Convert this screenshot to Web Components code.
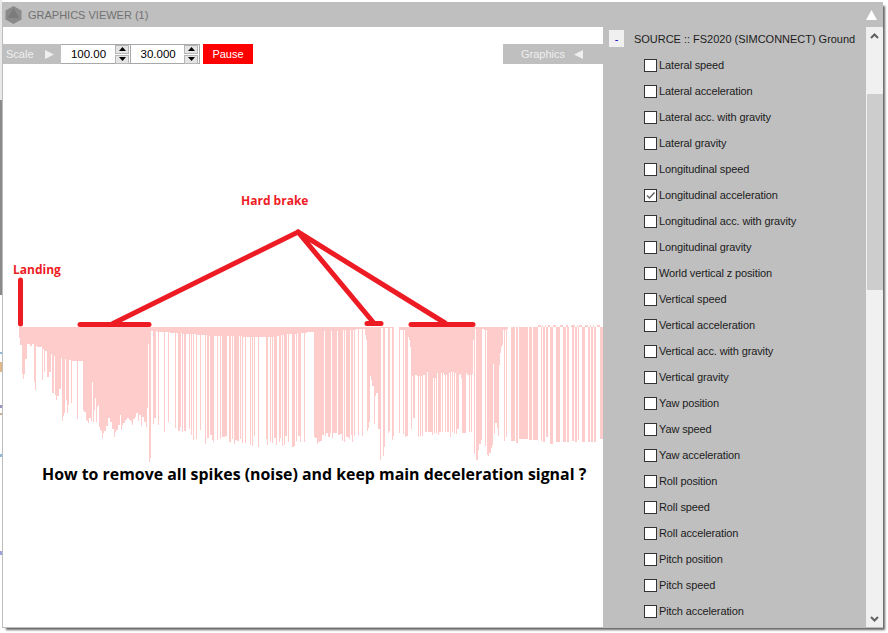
<!DOCTYPE html>
<html><head><meta charset="utf-8">
<style>
html,body{margin:0;padding:0;width:888px;height:633px;overflow:hidden}
body{background:
linear-gradient(#e8e8e8 0 100px,#8a8a8a 100px 295px,#fff 295px 352px,#8fb8e0 352px 354px,#fff 354px 362px,#e0b888 362px 372px,#fff 372px 405px,#a090c0 405px 408px,#fff 408px 413px,#c8b090 413px 415px,#fff 415px 454px,#8fb8e0 454px 457px,#fff 457px 551px,#a0a0e0 551px 555px,#fff 555px) no-repeat 0 0/2px 633px #fff;
font-family:"Liberation Sans",Arial,sans-serif}
</style></head><body>
<gv-window>
<gv-titlebar slot="title">GRAPHICS VIEWER (1)</gv-titlebar>
<gv-toolbar slot="tools"></gv-toolbar>
<gv-chart slot="chart"></gv-chart>
<gv-tree slot="tree">
<gv-check>Lateral speed</gv-check><gv-check>Lateral acceleration</gv-check><gv-check>Lateral acc. with gravity</gv-check><gv-check>Lateral gravity</gv-check><gv-check>Longitudinal speed</gv-check><gv-check checked>Longitudinal acceleration</gv-check><gv-check>Longitudinal acc. with gravity</gv-check><gv-check>Longitudinal gravity</gv-check><gv-check>World vertical z position</gv-check><gv-check>Vertical speed</gv-check><gv-check>Vertical acceleration</gv-check><gv-check>Vertical acc. with gravity</gv-check><gv-check>Vertical gravity</gv-check><gv-check>Yaw position</gv-check><gv-check>Yaw speed</gv-check><gv-check>Yaw acceleration</gv-check><gv-check>Roll position</gv-check><gv-check>Roll speed</gv-check><gv-check>Roll acceleration</gv-check><gv-check>Pitch position</gv-check><gv-check>Pitch speed</gv-check><gv-check>Pitch acceleration</gv-check>
</gv-tree>
<gv-scrollbar slot="scroll"></gv-scrollbar>
</gv-window>
<script>
function def(name,html,init){
  customElements.define(name,class extends HTMLElement{
    constructor(){super();const r=this.attachShadow({mode:'open'});r.innerHTML=html;if(init)init(r,this);}
  });
}
def('gv-window',`<style>
:host{display:flex;flex-direction:column;box-sizing:border-box;position:absolute;left:2px;top:2px;width:881px;height:626px;background:#bfbfbf;border-left:1px solid #bdbdbd;box-shadow:3px 3px 2px -1px #666}
.main{flex:1;display:flex;min-height:0}
.left{width:600px;background:#fff;display:flex;flex-direction:column;padding-top:17px;box-sizing:border-box}
.right{flex:1;display:flex;min-width:0}
.bottom{height:1px;background:#bdbdbd}
</style><slot name="title"></slot><div class="main"><div class="left"><slot name="tools"></slot><slot name="chart"></slot></div><div class="right"><slot name="tree"></slot><slot name="scroll"></slot></div></div><div class="bottom"></div>`);
def('gv-titlebar',`<style>
:host{display:flex;align-items:center;height:25px;background:#bfbfbf;color:#717171;font:11px "Liberation Sans",Arial,sans-serif;padding:0 5px 0 2px;flex:none}
svg{flex:none}
.t{margin-left:6px;flex:1;}
</style>
<svg width="17" height="18" viewBox="0 0 17 18"><path d="M8.5 0 16.5 4.5V13.5L8.5 18 .5 13.5V4.5Z" fill="#8a8a8a"/><path d="M8.5 2 14 12H3Z" fill="#7b7b7b"/></svg>
<span class="t"><slot></slot></span>
<svg width="11" height="10" viewBox="0 0 11 10" style="margin-right:1px"><path d="M5.5 0 11 10H0Z" fill="#fff"/></svg>`);
def('gv-spin',`<style>
:host{display:flex;align-items:center;box-sizing:border-box;height:20px;width:69px;background:#fff;font:11.5px "Liberation Sans",Arial,sans-serif;color:#000;flex:none}
.v{width:53px;text-align:center;padding-left:1px}
.b{display:flex;flex-direction:column;gap:1px;width:14px;margin-left:auto;margin-right:1px}
.b i{display:flex;align-items:center;justify-content:center;background:#e4e4e4;border:1px solid #b5b5b5;box-sizing:content-box;height:7px}
</style><span class="v"><slot></slot></span><span class="b"><i><svg width="7" height="4"><path d="M3.5 0 7 4H0Z"/></svg></i><i><svg width="7" height="4"><path d="M0 0H7L3.5 4Z"/></svg></i></span>`);
def('gv-toolbar',`<style>
:host{display:flex;height:20px;flex:none;font:11px "Liberation Sans",Arial,sans-serif}
.scale{display:flex;align-items:center;width:58px;box-sizing:border-box;background:#bfbfbf;color:#efefef;padding-left:3px}
.scale svg{margin-left:11px}
.spins{display:flex;border:1px solid #a8a8a8;border-left:0;box-sizing:border-box;height:20px;align-items:center;width:139px}
.spins gv-spin{height:18px}
.spins gv-spin+gv-spin{border-left:1px solid #a8a8a8}
.pause{margin-left:3px;width:50px;background:#f00;color:#fff;display:flex;align-items:center;justify-content:center}
.g{margin-left:auto;width:100px;background:#bfbfbf;color:#efefef;display:flex;align-items:center;padding-left:18px;box-sizing:border-box}
.g svg{margin-left:9px}
</style>
<div class="scale">Scale<svg width="9" height="9"><path d="M0 0 9 4.5 0 9Z" fill="#efefef"/></svg></div>
<div class="spins"><gv-spin>100.00</gv-spin><gv-spin>30.000</gv-spin></div>
<div class="pause">Pause</div>
<div class="g">Graphics<svg width="9" height="9"><path d="M9 0 0 4.500 9 9Z" fill="#efefef"/></svg></div>`);
def('gv-chart',`<style>
:host{display:block;position:relative;flex:1;background:#fff;overflow:hidden}
svg{display:block}
.l{position:absolute;font-family:"Open Sans",sans-serif;font-weight:700;white-space:nowrap}
.r{color:#ed1c24;font-size:12px;line-height:16px}
.k{color:#000;font-size:15.9px;line-height:22px}
</style>
<svg id="s" width="600" height="563" viewBox="3 64 600 563"><path id="p" fill="#ffcccc" shape-rendering="crispEdges"/>
<g stroke="#ed1c24" stroke-width="5" stroke-linecap="round" fill="none">
<path d="M20.500 280V324"/><path d="M80 324.500H149"/><path d="M367 323.500H381"/><path d="M411 324.500H473"/>
<path d="M113 323.500 298 232 373 322M298 232 445 323"/></g></svg>
<span class="l r" style="left:238px;top:129px">Hard brake</span>
<span class="l r" style="left:10px;top:198px">Landing</span>
<span class="l k" style="left:39px;top:399px">How to remove all spikes (noise) and keep main deceleration signal ?</span>`,
(r)=>{
 const B=327,h=new Array(620).fill(B);
 const z=(o,l)=>{for(const [a,b,c] of l){for(let x=o+Math.round(a/3);x<o+Math.round(b/3);x++)h[x]=Math.round(320+c/3)}};
 const floor=(pts)=>{for(let i=0;i<pts.length-1;i++){const [x0,y0]=pts[i],[x1,y1]=pts[i+1];for(let x=x0;x<x1;x++)h[x]=Math.round(y0+(y1-y0)*(x-x0)/(x1-x0))}};
 floor([[150,331],[215,336],[270,337],[290,334],[312,332],[330,331],[364,329],[365,329]]);
 z(0,[[57,60,55],[60,66,75],[66,69,162],[69,72,177],[72,75,162],[75,81,117],[81,90,72],[90,96,78],[96,102,72],[102,105,187],[105,108,210],[108,111,78],[111,126,82],[126,129,180],[129,132,87],[132,135,156],[135,141,93],[141,147,170],[147,153,155],[153,156,102],[156,162,220],[162,165,108],[165,168,225],[168,171,240],[171,177,228],[177,183,207],[183,186,114],[186,189,303],[189,192,288],[192,195,280],[195,198,117],[198,201,240],[201,204,278],[204,207,255],[207,213,120],[213,216,250],[216,231,123],[231,234,297],[234,249,123],[249,252,270],[252,258,275],[258,261,300],[261,264,303],[264,267,310],[267,273,295],[273,276,303],[276,279,186],[279,282,306],[282,285,270],[285,288,234],[288,291,306],[291,294,262],[294,297,255],[297,300,320],[300,303,330],[303,306,332],[306,309,354],[309,312,340],[312,318,332],[318,324,318],[324,330,295],[330,336,305],[336,342,327],[342,345,350],[345,348,335],[348,354,330],[354,360,315],[360,363,285],[363,366,330],[366,369,315],[369,375,308],[375,381,300],[381,387,295],[387,393,300],[393,396,305],[396,399,315],[399,405,298],[405,408,290],[408,414,280],[414,417,302],[417,423,285],[423,426,318],[426,432,290],[432,438,305],[438,441,322],[441,444,265],[444,447,72],[447,450,425],[450,453,415]]);
 z(150,[[9,12,312],[12,18,295],[24,27,315],[42,45,335],[54,57,305],[75,78,323],[84,90,333],[90,93,320],[96,99,335],[102,108,333],[117,120,327],[123,126,345],[129,132,360],[137,140,357],[150,153,330],[165,168,372],[170,177,353],[180,186,345],[186,189,360],[189,192,365],[200,204,360],[210,213,357],[216,219,352],[220,224,352],[225,230,347],[237,242,365],[246,249,358],[252,255,372],[255,260,360],[262,268,363],[270,273,358],[276,279,369],[285,288,368],[300,303,375],[305,308,378],[311,314,348],[324,327,381],[348,352,357],[351,354,375],[360,364,365],[366,369,368],[372,378,355],[378,381,375],[387,391,365],[391,394,355],[396,399,377],[402,405,375],[406,411,348],[415,418,365],[426,432,380],[432,435,378],[438,441,363],[444,450,348],[450,453,365],[462,465,365]]);
 z(300,[[0,3,365],[12,15,365],[42,46,352],[46,52,355],[52,55,372],[55,60,365],[60,66,362],[66,72,345],[75,78,348],[78,84,340],[84,90,350],[90,93,338],[96,99,355],[99,108,338],[108,111,338],[114,120,345],[120,126,342],[126,129,362],[132,135,365],[138,141,350],[141,147,352],[147,150,357],[153,156,345],[156,159,365],[162,165,348],[174,177,345],[186,189,348],
 [195,198,45],[198,201,60],[201,204,333],[204,207,325],[207,210,305],[210,213,168],[213,216,180],[216,222,197],[222,225,312],[225,228,228],[228,234,219],[234,240,327],[240,243,420],[243,249,24],[249,252,408],[252,255,380],[255,264,24],[264,267,338],[267,270,334],[270,276,24],[276,279,360],[279,282,348],[282,297,21],[297,300,340],[300,303,30],[303,306,30],[306,309,30],[309,312,342],[312,315,30],[315,318,350],[318,324,348],[324,327,50],[327,330,60],[330,333,80],[333,336,327],[336,339,168],[339,345,293],[345,351,165],[351,354,168],[354,357,350],[357,360,168],[360,363,348],[363,366,168],[366,369,348],[369,372,165],[372,375,165],[375,381,335],[381,384,155],[384,387,335],[387,396,335],[396,399,345],[399,402,175],[402,405,340],[405,408,175],[408,411,340],[411,414,160],[414,417,345],[417,423,335],[423,426,160],[426,429,335],[429,432,158],[432,435,165],[435,438,335],[438,441,165],[441,447,335],[447,450,160],[450,453,158],[453,456,350],[456,459,153],[459,462,158],[462,465,340],[465,468,158],[468,471,340],[471,474,165],[474,477,325],[477,480,165]]);
 z(450,[[0,3,350],[3,6,155],[6,9,335],[9,12,155],[12,15,340],[15,18,158],[18,21,342],[21,27,328],[27,30,165],[30,33,162],[33,36,175],[36,48,340],[48,51,160],[51,57,165],[57,60,335],[60,63,165],[63,66,335],[66,69,163],[69,72,60],[72,75,402],[75,78,27],[78,84,420],[84,87,390],[87,93,372],[93,96,360],[96,102,27],[102,105,30],[105,108,378],[108,111,30],[111,114,405],[114,117,408],[117,123,400],[123,126,385],[126,129,375],[129,132,132],[132,135,343],[135,141,310],[141,144,325],[144,147,348],[147,150,135],[150,153,100],[153,156,80],[156,159,75],[159,162,30],[162,165,363],[165,168,30],[168,171,350],[171,174,27],[183,195,364],[198,204,368],[207,234,358],[237,246,360],[249,264,360],[273,276,362],[279,285,365],[288,294,352],[300,309,372],[318,330,365],[339,348,365],[351,357,365],[366,372,362],[375,381,365],[384,387,360],[396,405,365],[414,420,365],[423,429,365],[432,438,365],[450,459,358]]);
 let d='';
 for(let x=19;x<603;x++){if(h[x]>B)d+=`M${x} ${B}V${h[x]}h1V${B}Z`}
 for(const [a,b] of [[264,273],[276,279],[285,288],[294,300],[309,318],[330,339],[348,354],[363,375],[381,384],[387,396],[405,414],[420,423],[429,432],[441,450]]){
  const x=450+Math.round(a/3),w=Math.round((b-a)/3);d+=`M${x} 325h${w}v2h-${w}Z`}
 r.getElementById('p').setAttribute('d',d);
});
def('gv-check',`<style>
:host{display:flex;align-items:center;height:26px;font:11px "Liberation Sans",Arial,sans-serif;color:#1c1c1c;padding-left:41px}
.c{box-sizing:border-box;width:13px;height:13px;background:#fff;border:1px solid #333;margin-right:2px;flex:none;display:flex}
.t{letter-spacing:-.12px;white-space:nowrap}
</style><span class="c" id="c"></span><span class="t"><slot></slot></span>`,
(r,el)=>{queueMicrotask(()=>{if(el.hasAttribute('checked'))r.getElementById('c').innerHTML='<svg width="11" height="11" viewBox="0 0 11 11"><path d="M2 5.500 4.500 8 9.500 2.500" fill="none" stroke="#666" stroke-width="1.500"/></svg>'})});
def('gv-tree',`<style>
:host{display:block;flex:1;box-sizing:border-box;background:#bfbfbf;overflow:hidden;padding-top:3px;font:11px "Liberation Sans",Arial,sans-serif;color:#1c1c1c}
.h{display:flex;align-items:center;height:17px;margin-bottom:5px;padding-left:6px;white-space:nowrap;letter-spacing:-.02px}
.b{width:15px;height:17px;background:#f0f0f0;color:#0000c8;display:flex;align-items:center;justify-content:center;margin-right:10px;flex:none}
</style><div class="h"><span class="b">-</span><span>SOURCE :: FS2020 (SIMCONNECT) Ground</span></div><slot></slot>`);
def('gv-scrollbar',`<style>
:host{display:flex;flex-direction:column;width:17px;background:#f0f0f0;flex:none;align-items:stretch;position:relative}
.a{height:17px;display:flex;align-items:center;justify-content:center}
.th{height:196px;background:#cdcdcd;margin-top:50px;margin-left:1px}
.sp{flex:1}
</style><div class="a"><svg width="9" height="6" viewBox="0 0 9 6"><path d="M1 5 4.500 1.500 8 5" fill="none" stroke="#606060" stroke-width="2"/></svg></div><div class="th"></div><div class="sp"></div><div class="a"><svg width="9" height="6" viewBox="0 0 9 6"><path d="M1 1 4.500 4.500 8 1" fill="none" stroke="#606060" stroke-width="2"/></svg></div>`);
</script>
</body></html>
